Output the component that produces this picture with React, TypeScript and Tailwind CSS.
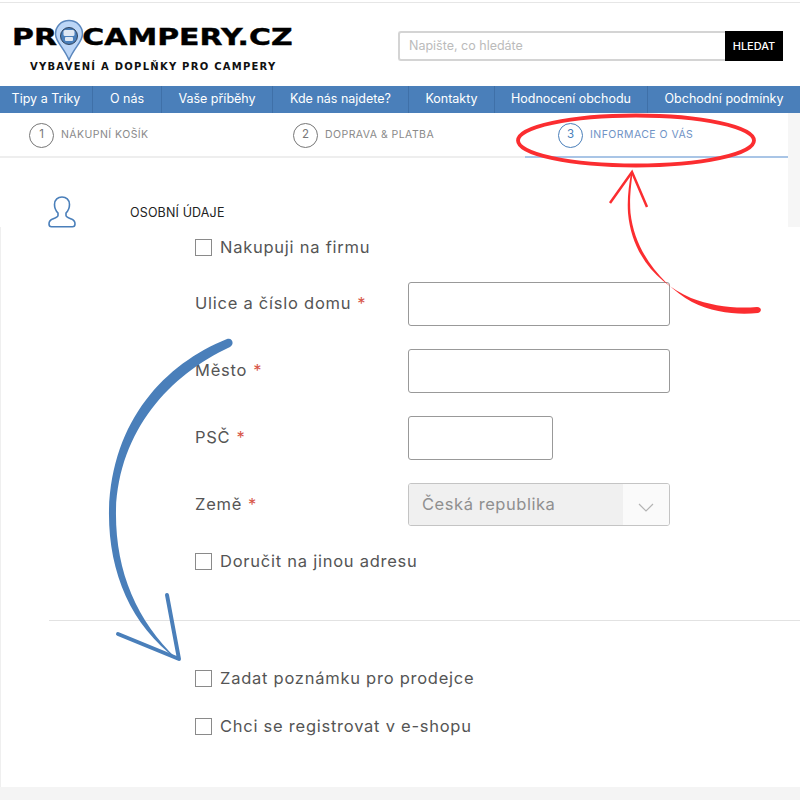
const NAV = [
  { label: "Tipy a Triky", width: "w-[93px]" },
  { label: "O nás", width: "w-[69px]" },
  { label: "Vaše příběhy", width: "w-[111px]" },
  { label: "Kde nás najdete?", width: "w-[136px]" },
  { label: "Kontakty", width: "w-[86px]" },
  { label: "Hodnocení obchodu", width: "w-[153px]" },
  { label: "Obchodní podmínky", width: "w-[152px]" },
];

const font = "font-['Inter','Liberation_Sans',sans-serif]";
const bodyText = "text-[16.500px] tracking-[0.75px] text-[#555] whitespace-nowrap";

function Step({ n, label, active, className }: { n: number; label: string; active?: boolean; className: string }) {
  const ring = active ? "border-[#4a7fba] text-[#4a7fba]" : "border-[#777] text-[#777]";
  return (
    <div className={`flex h-[44px] items-center ${className}`}>
      <span className={`flex h-[25px] w-[25px] items-center justify-center rounded-full border-[1.5px] text-[11.500px] ${ring}`}>
        {n}
      </span>
      <span className={`ml-[7px] mb-[1px] text-[10.500px] tracking-[0.45px] whitespace-nowrap ${active ? "text-[#6f93c6]" : "text-[#8a8a8a]"}`}>
        {label}
      </span>
    </div>
  );
}

function Checkbox({ label, className }: { label: string; className: string }) {
  return (
    <label className={`flex h-[17px] items-center ${className}`}>
      <span className="h-[17px] w-[17px] shrink-0 border border-[#8a8a8a] bg-white" />
      <span className={`ml-[8px] ${bodyText}`}>{label}</span>
    </label>
  );
}

function Field({ label, width, children }: { label: string; width: string; children?: React.ReactNode }) {
  return (
    <div className="flex h-[44px] items-start">
      <div className={`flex h-[42px] w-[213px] items-center ${bodyText}`}>
        {label}
        <span className="ml-[6px] text-[#d8584a]">*</span>
      </div>
      {children ?? <div className={`h-[44px] ${width} rounded-[3px] border border-[#999] bg-white`} />}
    </div>
  );
}

export default function App() {
  return (
    <div className={`relative flex h-[800px] w-[800px] flex-col overflow-hidden bg-white ${font}`}>
      <div className="h-[3px] border-b border-[#e6e6e6]" />

      {/* header */}
      <header className="flex h-[83px] items-start">
        <div className="relative ml-[12px] h-[83px] w-[386px]">
          <div className="absolute top-[20px] left-0 origin-left scale-x-[1.3] font-['DejaVu_Sans',sans-serif] text-[23px] leading-[28px] font-bold whitespace-nowrap text-black [-webkit-text-stroke:0.4px_#000]">
            PROCAMPERY.CZ
          </div>
          <svg className="absolute top-[16px] left-[42px]" width="30" height="42" viewBox="0 0 30 42">
            <path d="M15 1.500C7 1.500 1.500 7.500 1.500 15c0 8 8 13 13.500 26C20.500 28 28.500 23 28.500 15 28.500 7.500 23 1.500 15 1.500Z" fill="#bcd6f7" stroke="#5b87bd" strokeWidth="1.500" />
            <circle cx="15" cy="17" r="8.500" fill="#4a7fba" stroke="#1d2a3c" strokeWidth="0.800" />
            <rect x="9.500" y="11" width="11" height="6" rx="1.500" fill="#dfe8f3" />
            <rect x="11" y="18" width="8" height="4" rx="1" fill="#dfe8f3" />
          </svg>
          <div className="absolute top-[57px] left-[18px] font-['DejaVu_Sans',sans-serif] text-[10px] leading-[14px] font-bold tracking-[1.250px] whitespace-nowrap text-[#111]">
            VYBAVENÍ A DOPLŇKY PRO CAMPERY
          </div>
        </div>
        <div className="mt-[28px] flex h-[30px]">
          <div className="flex w-[327px] items-center rounded-l-[3px] border-2 border-r-0 border-[#d4d4d4] bg-white pl-[9px] text-[12.500px] text-[#bbb]">
            Napište, co hledáte
          </div>
          <div className="flex w-[58px] items-center justify-center bg-black text-[11px] font-medium text-white">
            HLEDAT
          </div>
        </div>
      </header>

      {/* menu */}
      <nav className="flex h-[27px] bg-[#4a7fba]">
        {NAV.map((item, i) => (
          <div
            key={item.label}
            className={`flex ${item.width} items-center justify-center text-[12.500px] whitespace-nowrap text-white ${
              i < NAV.length - 1 ? "border-r border-[#3f70a8]" : ""
            }`}
          >
            {item.label}
          </div>
        ))}
      </nav>

      {/* steps */}
      <div className="flex h-[45px]">
        <div className="flex w-[525px] border-b-2 border-[#eeeeee]">
          <Step n={1} label="NÁKUPNÍ KOŠÍK" className="ml-[29px] w-[264px]" />
          <Step n={2} label="DOPRAVA & PLATBA" className="" />
        </div>
        <div className="w-[263px] border-b-2 border-[#a9c5e6] pl-[33px]">
          <Step n={3} label="INFORMACE O VÁS" active className="" />
        </div>
        <div className="w-[12px] bg-[#f6f6f6]" />
      </div>

      {/* personal data head */}
      <div className="flex h-[69px]">
        <div className="flex flex-1 pt-[38px] pl-[48px]">
          <svg width="28" height="32" viewBox="0 0 28 32" fill="none" stroke="#4a7fba" strokeWidth="1.600">
            <path d="M14 1C10 1 6.500 3.500 6.500 8.500c0 3.500 1.500 6.500 3.500 8.500v2.500c0 1.500-3 2.500-5.500 3.500C2 24 1 26 1 28c0 1.500 1 2.800 2.500 2.800h21c1.500 0 2.500-1.300 2.500-2.800 0-2-1-4-3.500-5-2.500-1-5.500-2-5.500-3.500V17c2-2 3.500-5 3.500-8.500C21.500 3.500 18 1 14 1Z" />
          </svg>
          <div className="ml-[54px] pt-[9px] text-[12.500px] leading-[16px] tracking-[0.15px] text-[#222]">OSOBNÍ ÚDAJE</div>
        </div>
        <div className="w-[12px] bg-[#f6f6f6]" />
      </div>

      {/* form */}
      <main className="flex flex-1 flex-col border-l border-[#efefef] pt-[12px]">
        <div className="pl-[194px]">
          <Checkbox label="Nakupuji na firmu" className="" />
          <div className="mt-[26px] flex flex-col gap-[23px]">
            <Field label="Ulice a číslo domu" width="w-[262px]" />
            <Field label="Město" width="w-[262px]" />
            <Field label="PSČ" width="w-[145px]" />
            <Field label="Země" width="w-[262px]">
              <div className="flex h-[43px] w-[262px] overflow-hidden rounded-[3px] border border-[#c4c4c4]">
                <div className="flex w-[214px] items-center bg-[#f0f0f0] pl-[13px] text-[16.500px] tracking-[0.55px] text-[#8f8f8f]">
                  Česká republika
                </div>
                <div className="flex flex-1 items-center justify-center bg-[#fafafa] pt-[6px]">
                  <svg width="16" height="9" viewBox="0 0 16 9" fill="none" stroke="#b4b4b4" strokeWidth="1.200">
                    <path d="M1 1l7 7 7-7" />
                  </svg>
                </div>
              </div>
            </Field>
          </div>
          <Checkbox label="Doručit na jinou adresu" className="mt-[26px]" />
        </div>
        <div className="mt-[50px] ml-[48px] border-t border-[#e2e2e2]" />
        <div className="pt-[49px] pl-[194px]">
          <Checkbox label="Zadat poznámku pro prodejce" className="" />
          <Checkbox label="Chci se registrovat v e-shopu" className="mt-[31px]" />
        </div>
      </main>

      <footer className="h-[13px] bg-[#f4f4f4]" />

      {/* hand-drawn annotations */}
      <svg className="pointer-events-none absolute inset-0" width="800" height="800" viewBox="0 0 800 800" fill="none">
        <ellipse cx="636" cy="140.500" rx="118" ry="25" stroke="#fb2d30" strokeWidth="3.800" />
        <path
          d="M757 307C735 309 712 306 691 298 661 285 632 258 628 213 627 198 629 185 631 173L632.500 173C630.500 190 629.500 200 630.500 213 635 254 664 286 692 302 714 313 738 315 758 313 762 312 762 307 757 307Z"
          fill="#fb2d30"
        />
        <path d="M610 203l22-31 15 35" stroke="#fb2d30" strokeWidth="2.500" />
        <path
          d="M227 339C165 364 112 420 109 510 108 570 130 625 177 659 136 620 115 570 116 510 119 430 170 375 230 347 235 344 232 337 227 339Z"
          fill="#4a7fba"
        />
        <path d="M167 595l12 64-61-25" stroke="#4a7fba" strokeWidth="4" strokeLinecap="round" strokeLinejoin="round" />
      </svg>
    </div>
  );
}
